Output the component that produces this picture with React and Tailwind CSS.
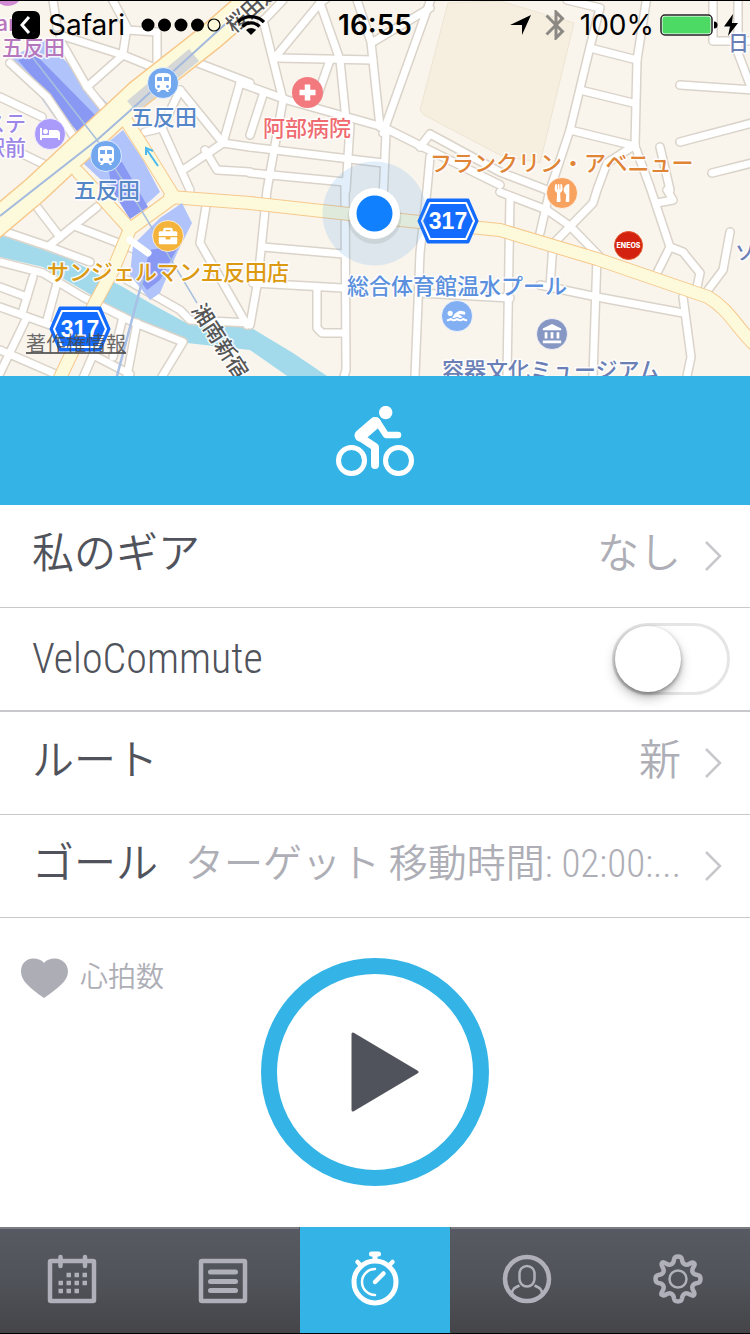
import { useState } from "react";
import { FaBed, FaBriefcase, FaSwimmer, FaUtensils } from "react-icons/fa";
import { MdTrain, MdAccountBalance, MdBluetooth } from "react-icons/md";

const streets = [
  "M53 0 57 27",
  "M110-5 127 27 123 53",
  "M127 30 157 32V67",
  "M60 35 123 55 155 68",
  "M123 55 87 87",
  "M60 40 87 87 107 112",
  "M10 63 47 97 74 137",
  "M0 97 42 117",
  "M0 143 60 172",
  "M198 63 250 83",
  "M240 83 223 143",
  "M180 90 223 143 250 147",
  "M223 143 183 170",
  "M145 132 162 128 190 190",
  "M162 128 180 90",
  "M205 150 217 170 250 172",
  "M263 20 283 100 267 190 258 280 250 325",
  "M283 0 262 22",
  "M320 3 340 60 346 120 350 125 346 190",
  "M320 3 277 55",
  "M332-6 320 3",
  "M277 58 373 60",
  "M357 0 371 42 380 127",
  "M373 42 430 8",
  "M432-4 383 133",
  "M386 133 383 200",
  "M330 60 317 97",
  "M263 95 250 135",
  "M250 147 383 163",
  "M250 173 345 182",
  "M420 147 430 134 500 172 547 190",
  "M430 157 427 190 420 253 415 376",
  "M567 0 600 8 590 47 570 130 550 190 540 233",
  "M647-4 637 60 635 146",
  "M590 48 637 60",
  "M580 90 633 103",
  "M570 130 635 146 650 187 670 247 657 273",
  "M635 145 607 163 597 190 593 203 553 244 550 287",
  "M713-4V41H750",
  "M738-4V53L752 90",
  "M680 85 752 90",
  "M680 142 752 123",
  "M660 147 670 190",
  "M712 173 752 163",
  "M500 192 547 210 570 226 600 257",
  "M510 197 507 376",
  "M597 257 593 376",
  "M540 285 597 297 683 313",
  "M683 297 691 357 687 376",
  "M667 190 673 200 657 203",
  "M670 247 683 252 700 273 697 287",
  "M730 232 723 270 708 290",
  "M420 293 510 298",
  "M345 182 346 370 343 380",
  "M263 247 343 254",
  "M253 283 343 288",
  "M317 290V328L322 333H345",
  "M207 200 200 243 247 325",
  "M37 207 60 237",
  "M97 207 50 245",
  "M0 230 50 247 90 262",
  "M77 227 147 254",
  "M127 280 180 310 190 320 250 323",
  "M0 262 43 273 83 297 133 322 183 342 160 380",
  "M0 287 27 297",
  "M33 277 23 310",
  "M57 283 47 320",
  "M0 307 50 325",
  "M27 317 0 373",
  "M0 350 60 376",
  "M123 317 113 357",
  "M137 323 127 376",
  "M93 355 130 374",
  "M93 355 83 378",
  "M240 83 287 100 383 127 423 147 500 185",
];

const avenues = [
  "M170 197 250 203 340 213 410 221 500 230 597 259 708 297C730 310 738 330 756 346",
  "M127 122 150 158 174 197 130 229 113 270 95 303 78 340 58 382",
  "M78 172 104 200 130 229",
];

const mainRoad = "M-10 228 35 190 138 94 213 35 260-6";

const labels = [
  { text: "五反田", x: 2, y: 55, size: 21, fill: "#b777bd" },
  { text: "an", x: -4, y: 31, size: 21, fill: "#b777bd" },
  { text: "ステ", x: -16, y: 131, size: 21, fill: "#9c86e8" },
  { text: "駅前", x: -16, y: 155, size: 21, fill: "#9c86e8" },
  { text: "五反田", x: 131, y: 125, size: 22, fill: "#5586c8" },
  { text: "五反田", x: 74, y: 198, size: 22, fill: "#5586c8" },
  { text: "阿部病院", x: 263, y: 136, size: 22, fill: "#ef6b70" },
  { text: "フランクリン・アベニュー", x: 430, y: 171, size: 22, fill: "#e08436" },
  { text: "サンジェルマン五反田店", x: 47, y: 280, size: 22, fill: "#dc9a12" },
  { text: "総合体育館温水プール", x: 347, y: 294, size: 22, fill: "#5a90dd" },
  { text: "容器文化ミュージアム", x: 442, y: 378, size: 22, fill: "#6a7fb5" },
  { text: "日本", x: 728, y: 50, size: 21, fill: "#6a7fb5" },
  { text: "ソニー", x: 735, y: 260, size: 20, fill: "#6a7fb5" },
];

const places = [
  { Icon: MdTrain, x: 163, y: 83, size: 24, fill: "#74a8ee" },
  { Icon: MdTrain, x: 106, y: 156, size: 24, fill: "#74a8ee" },
  { Icon: FaBed, x: 50, y: 134, size: 20, fill: "#aa9bfb" },
  { Icon: FaUtensils, x: 562, y: 193, size: 18, fill: "#f7a25f" },
  { Icon: FaBriefcase, x: 168, y: 236, size: 19, fill: "#f4b43c" },
  { Icon: FaSwimmer, x: 457, y: 316, size: 21, fill: "#82aef2" },
  { Icon: MdAccountBalance, x: 552, y: 334, size: 22, fill: "#8797c4" },
];

const RouteShield = ({ x, y }) => (
  <g transform={`translate(${x} ${y})`}>
    <path
      d="M-20-21H20L29 0 20 21H-20L-29 0Z"
      fill="#146cff"
      stroke="#146cff"
      strokeWidth="3"
      strokeLinejoin="round"
    />
    <path d="M-18-18H18L26 0 18 18H-18L-26 0Z" fill="none" stroke="#fff" strokeWidth="2" strokeLinejoin="round" />
    <text y="8" textAnchor="middle" fontSize="23" fontWeight="700" fill="#fff" className="font-['Liberation_Sans',sans-serif]">
      317
    </text>
  </g>
);

const CityMap = () => (
  <svg
    viewBox="0 0 750 376"
    preserveAspectRatio="xMidYMid slice"
    className="block h-[376px] w-full bg-[#f9f5ed] font-['Noto_Sans_CJK_JP',sans-serif]"
    role="img"
    aria-label="五反田"
  >
    <path d="M448 3 420 110 424 115 500 155 540 163 574 23 500 1Z" fill="#f6efe0" stroke="#eee4d3" />

    {/* River */}
    <path
      d="M0 235 67 258 123 287 150 303 190 325 250 327 293 353 330 378H290L250 350 187 343 135 322 103 302 83 290 43 267 0 257Z"
      fill="#a2daec"
    />

    {/* Station areas */}
    <path d="M12 57 45 40 110 106 86 134 55 118Z" fill="#b0c3fa" />
    <path d="M18 60 36 55 100 120 80 135 48 95Z" fill="#8998f3" />
    <path d="M83 163 123 130 143 160 160 192 130 219 112 190Z" fill="#b0c3fa" />
    <path d="M108 165 122 162 148 207 130 219 112 190Z" fill="#8998f3" />

    <g fill="none" strokeLinecap="round" strokeLinejoin="round">
      {streets.map((d) => (
        <path key={d} d={d} stroke="#dad3c9" strokeWidth="10" />
      ))}
      {streets.map((d) => (
        <path key={d} d={d} stroke="#fff" strokeWidth="7" />
      ))}
      {avenues.map((d) => (
        <path key={d} d={d} stroke="#f7c88c" strokeWidth="14" />
      ))}
      <path d={mainRoad} stroke="#f7c88c" strokeWidth="29" />
      {avenues.map((d) => (
        <path key={d} d={d} stroke="#fdfadb" strokeWidth="12" />
      ))}
      <path d={mainRoad} stroke="#fdfadb" strokeWidth="26" />
    </g>

    <path d="M182 203 192 223 177 253 160 293 150 300 130 275 133 245 160 218Z" fill="#b0c3fa" />
    <path d="M150 250 179 245 160 280 147 290 141 282Z" fill="#8998f3" />
    <path d="M130 240 148 253" stroke="#fff" strokeWidth="7" strokeLinecap="round" />
    <path d="M127 101 189 49 199 61 137 112Z" fill="#c3c9d6" opacity="0.7" />
    <path d="M0 216 97 140 133 108 200 47 232 18" fill="none" stroke="#a3b9dd" strokeWidth="2" />
    <path d="M33 58 97 140 137 203 197 303" fill="none" stroke="#a9c0dd" strokeWidth="1.5" />
    <path d="M143 278 117 376" fill="none" stroke="#a9c0e6" strokeWidth="2.5" />
    <path d="M158 166 147 150M146 155V148L153 151" fill="none" stroke="#4ab8ee" strokeWidth="2" />

    {/* Place pins */}
    <circle cx="8" cy="-9" r="15" fill="#d08ad2" />
    {places.map(({ Icon, x, y, size, fill }) => (
      <g key={`${x}-${y}`}>
        <circle cx={x} cy={y} r="15.5" fill={fill} stroke="#fff" strokeOpacity="0.7" />
        <Icon x={x - size / 2} y={y - size / 2} size={size} color="#fff" />
      </g>
    ))}
    <circle cx="307.5" cy="92.5" r="15.5" fill="#f27a7e" />
    <path d="M307.5 84.5V100.5M299.5 92.5H315.5" stroke="#fff" strokeWidth="5.5" />
    <circle cx="628.5" cy="245.5" r="14" fill="#d3220f" stroke="#e2562a" />
    <text x="628.5" y="248" textAnchor="middle" fontSize="7" fontWeight="800" fill="#fff" className="font-['Inter',sans-serif]">
      ENEOS
    </text>

    <RouteShield x={448} y={221} />
    <RouteShield x={80} y={329} />

    <g fontWeight="500" stroke="#fff" strokeOpacity="0.85" strokeWidth="3" strokeLinejoin="round" paintOrder="stroke">
      {labels.map(({ text, x, y, size, fill }) => (
        <text key={`${text}-${x}`} x={x} y={y} fontSize={size} fill={fill}>
          {text}
        </text>
      ))}
      <text fontSize="21" fill="#555" transform="translate(191 310) rotate(57)">
        湘南新宿
      </text>
      <text fontSize="21" fill="#555" transform="translate(234 34) rotate(-42)">
        桜田通り
      </text>
    </g>
    <text x="26" y="351" fontSize="20" fontWeight="400" fill="#444" fillOpacity="0.8" textDecoration="underline">
      著作権情報
    </text>

    {/* Current position */}
    <circle cx="374.5" cy="213.5" r="52" fill="#4a9ae8" fillOpacity="0.16" />
    <circle cx="374.5" cy="217" r="27" fill="#000" fillOpacity="0.08" />
    <circle cx="374.5" cy="213.5" r="25.5" fill="#fff" />
    <circle cx="374.5" cy="213.5" r="18" fill="#1180ff" />
  </svg>
);

const StatusBar = () => (
  <div className="absolute inset-x-0 top-0 grid h-12 grid-cols-[1fr_auto_1fr] items-center border-t border-black px-3 font-['Inter',sans-serif] text-[28px] font-normal text-black">
    <div className="flex items-center gap-2">
      <svg viewBox="0 0 28 28" className="size-7">
        <rect width="28" height="28" rx="6" />
        <path d="M17 6 10 14 17 22" fill="none" stroke="#fff" strokeWidth="3" />
      </svg>
      <a href="#safari" className="mr-2">
        Safari
      </a>
      <svg viewBox="0 0 80 14" className="mr-2 h-[14px] w-20">
        <circle cx="7" cy="7" r="6.5" />
        <circle cx="23.5" cy="7" r="6.5" />
        <circle cx="40" cy="7" r="6.5" />
        <circle cx="56.5" cy="7" r="6.5" />
        <circle cx="73" cy="7" r="6" fill="none" stroke="#000" strokeWidth="1.2" />
      </svg>
      <svg viewBox="0 0 28 20" className="h-5 w-7">
        <path d="M1 7a18.5 18.5 0 0 1 26 0M5.5 11.5a12 12 0 0 1 17 0" fill="none" stroke="#000" strokeWidth="3.2" />
        <path d="M9 15a7 7 0 0 1 10 0L14 20Z" />
      </svg>
    </div>
    <time className="font-semibold">16:55</time>
    <div className="flex items-center justify-end gap-[6px]">
      <svg viewBox="0 0 22 22" className="size-[22px]">
        <path d="M21 1 12 21V11L0 11Z" />
      </svg>
      <MdBluetooth className="size-9 text-[#8c8984]" />
      <span>100%</span>
      <svg viewBox="0 0 58 22" className="h-[22px] w-[58px]">
        <rect x="1" y="1" width="51" height="20" rx="4" fill="#fff" stroke="#222" strokeWidth="1.5" />
        <rect x="2.5" y="2.5" width="48" height="17" rx="2.5" fill="#4cd964" />
        <path d="M54 7.5q3.5 0 3.5 3.5t-3.5 3.5Z" />
      </svg>
      <svg viewBox="0 0 14 22" className="h-[22px] w-[14px]">
        <path d="M9 0 0 12.500H6L4 22 14 9H8Z" />
      </svg>
    </div>
  </div>
);

const CyclistIcon = () => (
  <svg viewBox="0 0 78 70" className="h-[70px] w-[78px]" fill="none" stroke="#fff">
    <circle cx="15.5" cy="54.5" r="13" strokeWidth="5" />
    <circle cx="62.5" cy="54.5" r="13" strokeWidth="5" />
    <circle cx="49.7" cy="6.5" r="6.7" fill="#fff" stroke="none" />
    <g strokeLinecap="round" strokeLinejoin="round">
      <path d="M39 59V41L24 31" strokeWidth="8" />
      <path d="M24.500 29.500 39 17" strokeWidth="12" />
      <path d="M41 15 50 29H62" strokeWidth="6.5" />
    </g>
  </svg>
);

const Chevron = () => (
  <svg viewBox="0 0 17 30" className="ml-6 h-[30px] w-[17px] shrink-0" fill="none" stroke="#c7c7cc" strokeWidth="2.5">
    <path d="M1 1 15 15 1 29" />
  </svg>
);

const Row = ({ label, value, long }) => (
  <button type="button" className="flex h-[103px] w-full items-center border-b border-[#c8c7cc] pr-7 pl-8 text-left font-[350]">
    <span className="shrink-0 pb-1 text-[42px]">{label}</span>
    <span className={`ml-auto truncate pb-1 pl-6 leading-tight text-[#aeaeb6] ${long ? "text-[39px]" : "text-[42px]"}`}>
      {value}
    </span>
    <Chevron />
  </button>
);

const CalendarIcon = () => (
  <svg viewBox="0 0 50 50" className="size-[50px]" fill="none" stroke="currentColor">
    <rect x="3" y="7" width="44" height="40" rx="1" strokeWidth="4.5" />
    <path d="M13.5 3V12M38 3V12" strokeWidth="4.5" strokeLinecap="round" />
    <path
      d="M19.5 21h4.5M27.5 21h4.5M35.5 21h4.5M11.5 29h4.5M19.5 29h4.5M27.5 29h4.5M35.5 29h4.5M11.5 37h4.5M19.5 37h4.5M27.5 37h4.5"
      strokeWidth="4.5"
    />
  </svg>
);

const ListIcon = () => (
  <svg viewBox="0 0 50 50" className="size-[50px]" fill="none" stroke="currentColor">
    <rect x="3" y="7" width="44" height="40" rx="1" strokeWidth="4.5" />
    <path d="M12.5 18H37.5M12.5 27.5H37.5M12.5 36.5H37.5" strokeWidth="5" strokeLinecap="round" />
  </svg>
);

const StopwatchIcon = () => (
  <svg viewBox="0 0 50 56" className="h-14 w-[50px]" fill="none" stroke="currentColor" strokeLinecap="round">
    <circle cx="25" cy="32" r="21" strokeWidth="5" />
    <path d="M21.5 4H28.5M25 4V9" strokeWidth="5" />
    <path d="M7.5 12 11 15.5M42.5 12 39 15.5" strokeWidth="4.5" />
    <path d="M25 19a13 13 0 0 0 0 26" strokeWidth="2.5" />
    <path d="M25 32 33.5 23.5" strokeWidth="4.5" />
  </svg>
);

const ProfileIcon = () => (
  <svg viewBox="0 0 50 50" className="size-[50px]" fill="none" stroke="currentColor">
    <circle cx="25" cy="25" r="22" strokeWidth="4.5" />
    <rect x="17.5" y="12" width="15" height="20.5" rx="7.5" strokeWidth="2.5" />
    <path d="M17.5 31.5C12 34 10 35 10 40M32.5 31.5C38 34 40 35 40 40" strokeWidth="2.5" />
  </svg>
);

const GearIcon = () => (
  <svg viewBox="0 0 50 50" className="size-[50px]" fill="none" stroke="currentColor">
    <path
      d="M21 5.5Q21.500 2.500 25 2.500T29 5.500C29.500 10.500 33 12 37 9.500Q39.500 8 41 9T40.500 13C38 17 39.500 20.500 44.500 21Q47.500 21.500 47.500 25T44.500 29C39.500 29.500 38 33 40.500 37Q42 39.500 41 41T37 40.500C33 38 29.500 39.500 29 44.500Q28.500 47.500 25 47.500T21 44.500C20.500 39.500 17 38 13 40.500Q10.500 42 9 41T9.500 37C12 33 10.500 29.500 5.500 29Q2.500 28.500 2.500 25T5.500 21C10.500 20.500 12 17 9.500 13Q8 10.500 9 9T13 9.500C17 12 20.500 10.500 21 5.500Z"
      strokeWidth="4.5"
      strokeLinejoin="round"
    />
    <circle cx="25" cy="25" r="8.5" strokeWidth="2.5" />
  </svg>
);

const tabs = [
  { id: "calendar", label: "カレンダー", Icon: CalendarIcon },
  { id: "feed", label: "フィード", Icon: ListIcon },
  { id: "workout", label: "ワークアウト", Icon: StopwatchIcon },
  { id: "profile", label: "プロフィール", Icon: ProfileIcon },
  { id: "settings", label: "設定", Icon: GearIcon },
];

const TabBar = () => {
  const [active, setActive] = useState("workout");

  return (
    <nav className="overflow-hidden border-b border-black bg-linear-to-b from-[#585a63] via-[#505359] to-[#454549]">
      <div className="-mx-1 grid grid-cols-5">
        {tabs.map(({ id, label, Icon }) => (
          <button
            key={id}
            type="button"
            aria-label={label}
            onClick={() => setActive(id)}
            className={
              id === active
                ? "mx-px flex h-[106px] items-center justify-center bg-[#34b4e6] pb-1 text-white"
                : "flex h-[106px] items-center justify-center border-t-2 border-[#7a7b83] pb-1 text-[#b0b0ba]"
            }
          >
            <Icon />
          </button>
        ))}
      </div>
    </nav>
  );
};

const App = () => {
  const [commute, setCommute] = useState(false);

  return (
    <div className="flex min-h-screen flex-col bg-white font-['Roboto_Condensed','Liberation_Sans_Narrow','Noto_Sans_CJK_JP',sans-serif] leading-none font-light text-[#50535b]">
      <header className="relative">
        <CityMap />
        <StatusBar />
      </header>

      <div className="flex h-[129px] items-center justify-center bg-[#34b4e6]">
        <CyclistIcon />
      </div>

      <main className="flex flex-1 flex-col">
        <Row label="私のギア" value="なし" />

        <label className="flex h-[104px] items-center justify-between border-b-2 border-[#c8c7cc] pr-5 pl-8">
          <span className="text-[42px]">VeloCommute</span>
          <input
            type="checkbox"
            role="switch"
            checked={commute}
            onChange={(e) => setCommute(e.target.checked)}
            className="h-[72px] w-[118px] appearance-none rounded-full border-3 border-[#e5e5e5] bg-white before:block before:size-[66px] before:rounded-full before:bg-white before:shadow-[0_6px_12px_rgba(0,0,0,0.25),0_2px_4px_rgba(0,0,0,0.35)] checked:bg-[#4cd964] checked:before:ml-auto"
          />
        </label>

        <Row label="ルート" value="新" />
        <Row label="ゴール" value="ターゲット 移動時間: 02:00:..." long />

        <section className="grid grid-cols-[1fr_auto_1fr] items-start pt-10">
          <div className="flex items-center gap-3 pl-5 text-[28px] font-[350] text-[#aeaeb6]">
            <svg viewBox="0 0 48 40" className="h-10 w-12" fill="#adadb6">
              <path d="M24 40C10 30 1 23 1 13.500 1 6 6 0.500 13 0.500 18 0.500 22 2 24 5 26 2 30 0.500 35 0.500 42 0.500 48 6 48 13.500 48 23 38 30 24 40Z" />
            </svg>
            <span>心拍数</span>
          </div>
          <button
            type="button"
            aria-label="スタート"
            className="flex size-[228px] items-center justify-center rounded-full border-[16px] border-[#34b4e6] pl-5"
          >
            <svg viewBox="0 0 68 80" className="h-20 w-[68px]">
              <path d="M2 2V78L66 40Z" fill="#50535b" stroke="#50535b" strokeWidth="3" strokeLinejoin="round" />
            </svg>
          </button>
        </section>
      </main>

      <TabBar />
    </div>
  );
};

export default App;
